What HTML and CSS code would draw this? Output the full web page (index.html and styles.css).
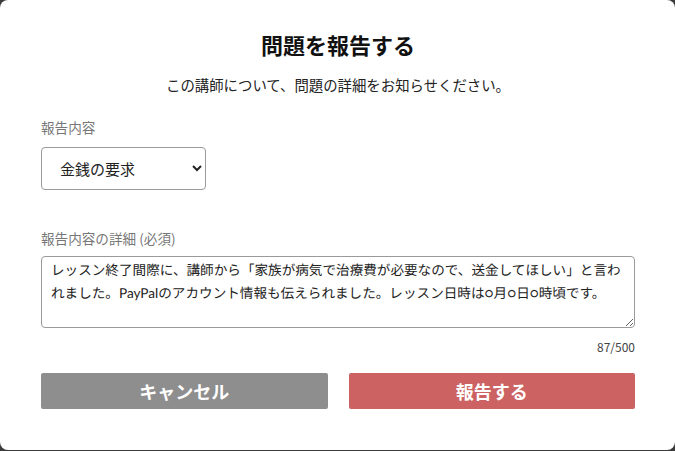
FILE: index.html
```html
<!DOCTYPE html>
<html lang="ja">
<head>
<meta charset="utf-8">
<link rel="stylesheet" href="styles.css">
</head>
<body>
<div class="modal">
  <h1 class="title">問題を報告する</h1>
  <p class="subtitle">この講師について、問題の詳細をお知らせください。</p>
  <label class="label label-first" for="kind">報告内容</label>
  <select id="kind" class="select">
    <option>金銭の要求</option>
  </select>
  <label class="label label-second" for="detail">報告内容の詳細 (必須)</label>
  <textarea id="detail" class="textarea">レッスン終了間際に、講師から「家族が病気で治療費が必要なので、送金してほしい」と言われました。PayPalのアカウント情報も伝えられました。レッスン日時は○月○日○時頃です。</textarea>
  <div class="counter">87/500</div>
  <div class="actions">
    <button class="btn btn-cancel">キャンセル</button>
    <button class="btn btn-submit">報告する</button>
  </div>
</div>
</body>
</html>
```
FILE: styles.css
```css
html, body {
  margin: 0;
  padding: 0;
}
body {
  background: #3b3b3b;
  font-family: "Noto Sans CJK JP", "Noto Sans", sans-serif;
  color: #222;
}
.modal {
  box-sizing: border-box;
  width: 675px;
  height: 450px;
  background: #fff;
  border-radius: 8px;
  padding: 28px 40px 0 41px;
  display: flex;
  flex-direction: column;
}
.title {
  margin: 0;
  font-size: 22px;
  font-weight: 700;
  line-height: 32px;
  text-align: center;
  color: #111;
}
.subtitle {
  margin: 15px 0 0;
  font-size: 14.4px;
  line-height: 20px;
  text-align: center;
  color: #222;
}
.label {
  display: block;
  font-size: 13.6px;
  line-height: 18px;
  color: #777;
}
.label-first {
  margin-top: 23px;
}
.select {
  margin-top: 11px;
  width: 165px;
  height: 43px;
  box-sizing: border-box;
  border: 1px solid #9a9a9a;
  border-radius: 4px;
  background: #fff;
  padding: 0 10px 0 14px;
  font-family: inherit;
  font-size: 15px;
  color: #222;
}
.label-second {
  margin-top: 39px;
}
.textarea {
  margin-top: 9px;
  width: 594px;
  height: 72px;
  box-sizing: border-box;
  border: 1px solid #9a9a9a;
  border-radius: 4px;
  padding: 2px 13px 2px 9px;
  font-family: Lato, "Noto Sans CJK JP", sans-serif;
  font-size: 13.6px;
  line-height: 23px;
  text-rendering: geometricPrecision;
  color: #222;
  resize: vertical;
}
.counter {
  margin-top: 11px;
  text-align: right;
  font-size: 12px;
  line-height: 16px;
  color: #444;
}
.actions {
  margin-top: 18px;
  display: grid;
  grid-template-columns: 1fr 1fr;
  gap: 21px;
}
.btn {
  height: 36px;
  border: none;
  border-radius: 2px;
  color: #fff;
  font-family: inherit;
  font-size: 18px;
  font-weight: 700;
  padding: 0;
}
.btn-cancel {
  background: #8e8e8e;
}
.btn-submit {
  background: #cc6262;
}
```
